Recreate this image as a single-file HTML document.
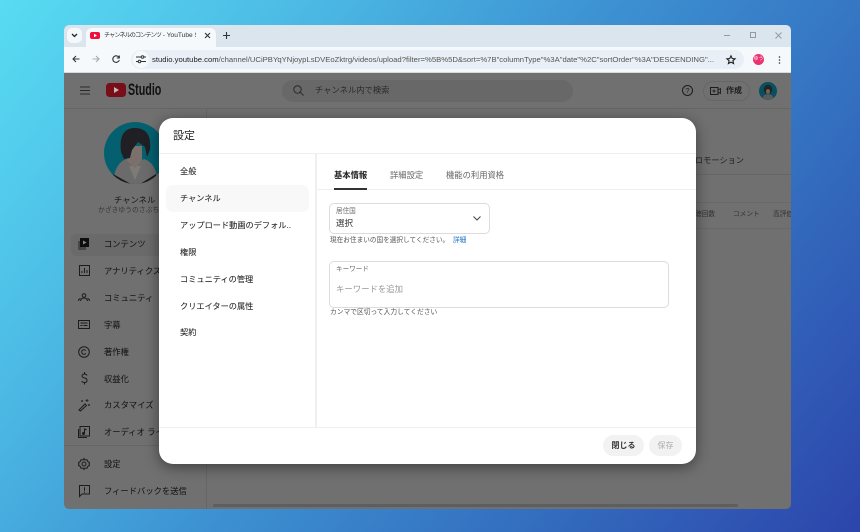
<!DOCTYPE html>
<html lang="ja"><head><meta charset="utf-8"><style>
*{box-sizing:border-box;margin:0;padding:0}
html,body{width:860px;height:532px;overflow:hidden}
body{position:relative;font-family:"Liberation Sans","Noto Sans CJK JP",sans-serif;background:linear-gradient(128deg,#58dcf2 0%,#4dbde6 22%,#3d92d2 48%,#3470c0 72%,#2c45ab 100%)}
#r{position:absolute;left:0;top:0;width:860px;height:532px;filter:blur(.3px)}
.a{position:absolute;white-space:nowrap}
.win{position:absolute;left:64px;top:25px;width:727px;height:484px;border-radius:5px;overflow:hidden;background:#707070}
.side{color:#161616;font-size:8.300px;left:104px;line-height:12px;-webkit-text-stroke:.05px #161616}
svg{position:absolute;overflow:visible}
.m{left:180px;font-size:8.200px;color:#222;line-height:12px;-webkit-text-stroke:.05px #222}
.t{font-size:8.300px;line-height:12px;top:169px}
</style></head><body><div id="r">
<div class="win"></div>
<!-- tab strip -->
<div class="a" style="left:64px;top:25px;width:727px;height:22px;background:#dae5ee;border-radius:5px 5px 0 0"></div>
<div class="a" style="left:67px;top:28px;width:15px;height:15px;background:#f4f8fb;border-radius:5px"></div>
<svg style="left:71px;top:33px" width="7" height="5"><path d="M1 1l2.500 2.500L6 1" fill="none" stroke="#222" stroke-width="1.300"/></svg>
<div class="a" style="left:86px;top:28px;width:130px;height:19px;background:#f6f9fc;border-radius:6px 6px 0 0"></div>
<svg style="left:90px;top:32px" width="10" height="7"><rect width="10" height="7" rx="2" fill="#f00f3c"/><path d="M4 1.800v3.400L7 3.500z" fill="#fff"/></svg>
<div class="a" style="left:104px;top:30px;width:92px;overflow:hidden;font-size:6.600px;line-height:11px;color:#333"><span style="font-size:6.200px;letter-spacing:-1px">チャンネルのコンテンツ</span> - YouTube S</div>
<svg style="left:204px;top:32px" width="7" height="7"><path d="M1 1l5 5M6 1l-5 5" stroke="#333" stroke-width="1.100"/></svg>
<svg style="left:223px;top:32px" width="7" height="7"><path d="M3.500 0v7M0 3.500h7" stroke="#333" stroke-width="1.100"/></svg>
<svg style="left:724px;top:35px" width="6" height="1"><path d="M0 .5h6" stroke="#999"/></svg>
<svg style="left:750px;top:32px" width="6" height="6"><rect x=".5" y=".5" width="5" height="5" fill="none" stroke="#999"/></svg>
<svg style="left:775px;top:32px" width="7" height="7"><path d="M.5.500l6 6M6.500.500l-6 6" stroke="#999"/></svg>
<!-- toolbar -->
<div class="a" style="left:64px;top:47px;width:727px;height:25px;background:#f6f9fc"></div>
<div class="a" style="left:64px;top:72px;width:727px;height:1px;background:#d9d9d9"></div>
<svg style="left:72px;top:55px" width="8" height="8"><path d="M7.500 4H1M4 1L1 4l3 3" fill="none" stroke="#333" stroke-width="1.100"/></svg>
<svg style="left:92px;top:55px" width="8" height="8"><path d="M.5 4H7M4 1l3 3-3 3" fill="none" stroke="#aaa" stroke-width="1.100"/></svg>
<svg style="left:112px;top:55px" width="8" height="8"><path d="M7 2.500A3.300 3.300 0 1 0 7.300 5M7.300.5v2.500H4.800" fill="none" stroke="#333" stroke-width="1.100"/></svg>
<div class="a" style="left:131px;top:50px;width:613px;height:19px;background:#e8eff6;border-radius:10px"></div>
<div class="a" style="left:133px;top:51px;width:16px;height:17px;background:#f6f9fc;border-radius:9px"></div>
<svg style="left:136px;top:55px" width="10" height="9"><path d="M0 2h5M8 2h2M0 6.500h2M5 6.500h5" stroke="#333"/><circle cx="6.500" cy="2" r="1.300" fill="none" stroke="#333"/><circle cx="3.500" cy="6.500" r="1.300" fill="none" stroke="#333"/></svg>
<div class="a" style="left:152px;top:53px;width:564px;overflow:hidden;font-size:7.700px;line-height:13px;color:#555"><span style="color:#222">studio.youtube.com</span>/channel/UCiPBYqYNjoypLsDVEoZktrg/videos/upload?filter=%5B%5D&amp;sort=%7B"columnType"%3A"date"%2C"sortOrder"%3A"DESCENDING"...</div>
<svg style="left:726px;top:55px" width="10" height="9"><path d="M5 .8l1.200 2.700 2.900.3-2.200 1.900.7 2.800L5 7.100 2.400 8.500l.7-2.800L.9 3.800l2.900-.3z" fill="none" stroke="#222" stroke-width="1.100"/></svg>
<div class="a" style="left:753px;top:54px;width:11px;height:11px;border-radius:50%;background:#ec3070;color:#fff;font-size:5px;line-height:11px;text-align:center">ゆう</div>
<svg style="left:778px;top:56px" width="3" height="8"><circle cx="1.500" cy="1" r=".8" fill="#333"/><circle cx="1.500" cy="4" r=".8" fill="#333"/><circle cx="1.500" cy="7" r=".8" fill="#333"/></svg>
<!-- studio header -->
<div class="a" style="left:64px;top:108px;width:727px;height:1px;background:#666"></div>
<svg style="left:80px;top:86px" width="10" height="9"><path d="M0 1h10M0 4.500h10M0 8h10" stroke="#2a2a2a"/></svg>
<svg style="left:106px;top:83px" width="20" height="14"><rect width="20" height="14" rx="3.500" fill="#7a0e18"/><path d="M8 4v6l5-3z" fill="#bbb"/></svg>
<div class="a" style="left:128px;top:80px;font-size:16.500px;font-weight:bold;line-height:20px;color:#111;transform:scaleX(.65);transform-origin:left">Studio</div>
<div class="a" style="left:282px;top:80px;width:291px;height:22px;border-radius:11px;background:#686868"></div>
<svg style="left:293px;top:85px" width="11" height="11"><circle cx="4.500" cy="4.500" r="3.700" fill="none" stroke="#2a2a2a"/><path d="M7.200 7.200L10.500 10.500" stroke="#2a2a2a"/></svg>
<div class="a" style="left:315px;top:84px;font-size:8.300px;line-height:13px;color:#2a2a2a">チャンネル内で検索</div>
<svg style="left:682px;top:85px" width="11" height="11"><circle cx="5.500" cy="5.500" r="5" fill="none" stroke="#1d1d1d"/><text x="5.500" y="8.200" font-size="7.500" text-anchor="middle" fill="#1d1d1d" font-family="Liberation Sans">?</text></svg>
<div class="a" style="left:703px;top:81px;width:47px;height:20px;border:1px solid #666;border-radius:10px"></div>
<svg style="left:710px;top:87px" width="11" height="8"><rect x=".5" y=".5" width="7.500" height="7" fill="none" stroke="#1d1d1d"/><path d="M8 3l2.500-1.500v5L8 5M2.500 4h3M4 2.500v3" fill="none" stroke="#1d1d1d" stroke-width=".9"/></svg>
<div class="a" style="left:726px;top:85px;font-size:8px;font-weight:bold;line-height:12px;color:#1d1d1d">作成</div>
<svg style="left:759px;top:82px" width="18" height="18"><clipPath id="c1"><circle cx="9" cy="9" r="9"/></clipPath><g clip-path="url(#c1)"><rect width="18" height="18" fill="#07505f"/><path d="M3 18q1-6 6-6t6 6z" fill="#5a5a5a"/><ellipse cx="9" cy="7.500" rx="4.200" ry="4.800" fill="#232323"/><ellipse cx="9" cy="9.500" rx="2" ry="2.500" fill="#6d655e"/></g></svg>
<!-- sidebar -->
<div class="a" style="left:206px;top:109px;width:1px;height:400px;background:#666"></div>
<svg style="left:104px;top:122px" width="62" height="62"><clipPath id="c2"><circle cx="31" cy="31" r="31"/></clipPath><g clip-path="url(#c2)"><rect width="62" height="62" fill="#04606f"/><path d="M9 62q1-20 13-25l9 5 9-5q13 4 14 25z" fill="#6b6b6b"/><path d="M8 62l1-10 18 10zM36 62l16-10 3 10z" fill="#1c1c1c"/><path d="M25 44l6 14 6-14z" fill="#7e7a76"/><path d="M22 24h16v14l-7 8-8-7z" fill="#7b716a"/><path d="M17 30q-3-24 14-24t15 22l-3 7-2-10-7-5-6 8-2 8-6 1z" fill="#202024"/></g></svg>
<div class="a" style="left:114px;top:194px;font-size:8.300px;line-height:12px;color:#161616">チャンネル</div>
<div class="a" style="left:98px;top:206px;font-size:6.800px;line-height:10px;color:#383838">かざきゆうのさぶち</div>
<div class="a" style="left:71px;top:234px;width:100px;height:22px;border-radius:5px;background:#6a6a6a"></div>
<svg style="left:78px;top:238px" width="12" height="12"><rect x="0" y="3" width="8" height="9" fill="#474747"/><rect x="2" y="0" width="9" height="9" fill="#0e0e0e"/><path d="M5 2.500v4l3.500-2z" fill="#888"/></svg>
<svg style="left:79px;top:265px" width="11" height="11" fill="none" stroke="#1c1c1c"><rect x=".5" y=".5" width="10" height="10"/><path d="M3 8V6M5.500 8V3M8 8V5"/></svg>
<svg style="left:78px;top:293px" width="12" height="9" fill="none" stroke="#1c1c1c"><circle cx="6" cy="2.500" r="1.800"/><path d="M2.500 8q.5-3 3.500-3t3.500 3M.5 8q0-2 2-2.500M11.500 8q0-2-2-2.500"/></svg>
<svg style="left:78px;top:320px" width="12" height="9" fill="none" stroke="#1c1c1c"><rect x=".5" y=".5" width="11" height="8"/><path d="M2.500 5.500h2M5.500 5.500h4M2.500 3h7" stroke-width=".9"/></svg>
<svg style="left:78px;top:346px" width="12" height="12" fill="none" stroke="#1c1c1c"><circle cx="6" cy="6" r="5.300"/><path d="M7.800 4.600a2.300 2.300 0 1 0 0 2.800"/></svg>
<svg style="left:81px;top:372px" width="7" height="13" fill="none" stroke="#1c1c1c"><path d="M6 3.500Q5.500 2 3.500 2T1 3.800Q1 5.500 3.500 6T6 8.500 3.500 10.500 1 9M3.500 0v2M3.500 10.500v2"/></svg>
<svg style="left:78px;top:399px" width="12" height="12" fill="none" stroke="#1c1c1c"><path d="M1 11L7 5l1.500 1.500L2.500 12z"/><path d="M9 0v3M7.500 1.500h3M11 5v2M10 6h2M4 1v2M3 2h2" stroke-width=".8"/></svg>
<svg style="left:78px;top:426px" width="12" height="12" fill="none" stroke="#1c1c1c"><rect x="2" y=".5" width="9.500" height="9.500"/><path d="M.5 3v8.500H9"/><path d="M6.500 7.500V3l2 .7" stroke-width="1.100"/><circle cx="5.500" cy="7.500" r="1" fill="#1c1c1c"/></svg>
<svg style="left:78px;top:458px" width="12" height="12" fill="none" stroke="#1c1c1c"><path d="M6 .5l1 1.500 2-.2.800 1.800 1.700.9L11 6l.5 1.500-1.700.9-.8 1.800-2-.2-1 1.500-1-1.500-2 .2-.8-1.800L.5 7.500 1 6 .5 4.500l1.700-.9L3 1.800l2 .2z"/><circle cx="6" cy="6" r="2"/></svg>
<svg style="left:79px;top:485px" width="11" height="12" fill="none" stroke="#1c1c1c"><path d="M.5.500h10v8.500H3L.5 11.500z"/><path d="M5.500 2.200v3.500M5.500 6.700v1.200"/></svg>
<div class="a side" style="top:238px">コンテンツ</div>
<div class="a side" style="top:265px">アナリティクス</div>
<div class="a side" style="top:292px">コミュニティ</div>
<div class="a side" style="top:319px">字幕</div>
<div class="a side" style="top:346px">著作権</div>
<div class="a side" style="top:373px">収益化</div>
<div class="a side" style="top:399px">カスタマイズ</div>
<div class="a side" style="top:426px">オーディオ ライブラリ</div>
<div class="a" style="left:64px;top:445px;width:142px;height:1px;background:#666"></div>
<div class="a side" style="top:458px">設定</div>
<div class="a side" style="top:485px">フィードバックを送信</div>
<!-- background page right -->
<div class="a" style="left:695px;top:155px;font-size:8.200px;line-height:12px;color:#1f1f1f">ロモーション</div>
<div class="a" style="left:207px;top:174px;width:584px;height:1px;background:#666"></div>
<div class="a" style="left:207px;top:202px;width:584px;height:1px;background:#686868"></div>
<div class="a" style="left:207px;top:228px;width:584px;height:1px;background:#686868"></div>
<div class="a" style="left:695px;top:210px;font-size:6.700px;line-height:10px;color:#333">聴回数</div>
<div class="a" style="left:733px;top:210px;font-size:6.700px;line-height:10px;color:#333">コメント</div>
<div class="a" style="left:773px;top:210px;width:18px;overflow:hidden;font-size:6.700px;line-height:10px;color:#333">高評価</div>
<div class="a" style="left:213px;top:504px;width:525px;height:3px;border-radius:2px;background:#5e5e5e"></div>
<!-- dialog -->
<div class="a" style="left:159px;top:118px;width:537px;height:346px;background:#fff;border-radius:14px;box-shadow:0 3px 14px rgba(0,0,0,.45)"></div>
<div class="a" style="left:173px;top:128px;font-size:11px;line-height:16px;color:#1f1f1f">設定</div>
<div class="a" style="left:159px;top:153px;width:537px;height:1px;background:#efefef"></div>
<div class="a" style="left:315px;top:154px;width:2px;height:273px;background:#efefef"></div>
<div class="a" style="left:159px;top:427px;width:537px;height:1px;background:#efefef"></div>
<div class="a" style="left:166px;top:185px;width:143px;height:27px;border-radius:7px;background:#f8f8f8"></div>
<div class="a m" style="top:166px">全般</div>
<div class="a m" style="top:193px">チャンネル</div>
<div class="a m" style="top:220px">アップロード動画のデフォル..</div>
<div class="a m" style="top:247px">権限</div>
<div class="a m" style="top:274px">コミュニティの管理</div>
<div class="a m" style="top:301px">クリエイターの属性</div>
<div class="a m" style="top:327px">契約</div>
<div class="a t" style="left:334px;font-weight:bold;color:#222">基本情報</div>
<div class="a t" style="left:390px;color:#666">詳細設定</div>
<div class="a t" style="left:446px;color:#666">機能の利用資格</div>
<div class="a" style="left:317px;top:189px;width:379px;height:1px;background:#efefef"></div>
<div class="a" style="left:334px;top:188px;width:33px;height:1.500px;background:#333"></div>
<div class="a" style="left:329px;top:203px;width:161px;height:31px;border:1px solid #dcdcdc;border-radius:5px"></div>
<div class="a" style="left:336px;top:207px;font-size:6.600px;line-height:9px;color:#666">居住国</div>
<div class="a" style="left:336px;top:217px;font-size:8.500px;line-height:12px;color:#333">選択</div>
<svg style="left:473px;top:216px" width="8" height="5"><path d="M.5.500L4 4 7.500.5" fill="none" stroke="#444"/></svg>
<div class="a" style="left:330px;top:236px;font-size:6.650px;line-height:10px;color:#555">現在お住まいの国を選択してください。</div>
<div class="a" style="left:453px;top:236px;font-size:6.700px;line-height:10px;color:#1a73c8">詳細</div>
<div class="a" style="left:329px;top:261px;width:340px;height:47px;border:1px solid #dcdcdc;border-radius:5px"></div>
<div class="a" style="left:336px;top:265px;font-size:6.600px;line-height:9px;color:#666">キーワード</div>
<div class="a" style="left:336px;top:283px;font-size:8.400px;line-height:12px;color:#999">キーワードを追加</div>
<div class="a" style="left:330px;top:308px;font-size:6.750px;line-height:10px;color:#555">カンマで区切って入力してください</div>
<div class="a" style="left:603px;top:435px;width:41px;height:21px;border-radius:11px;background:#f2f2f2;text-align:center;font-size:8px;line-height:21px;font-weight:bold;color:#333">閉じる</div>
<div class="a" style="left:649px;top:435px;width:33px;height:21px;border-radius:11px;background:#f2f2f2;text-align:center;font-size:8px;line-height:21px;color:#aaa">保存</div>
</div></body></html>
